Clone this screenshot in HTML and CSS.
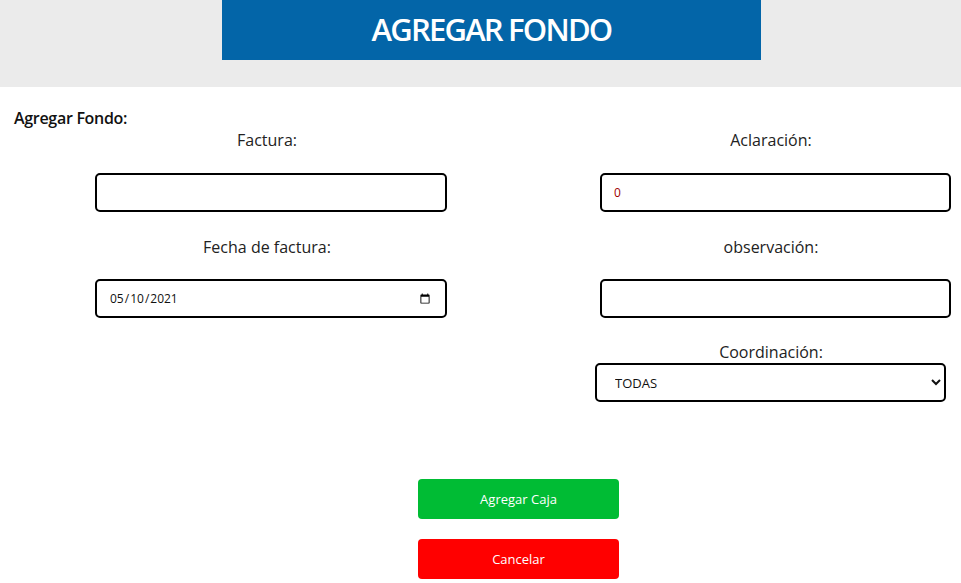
FILE: index.html
```html
<!DOCTYPE html>
<html lang="es">
<head>
<meta charset="utf-8">
<title>Agregar Fondo</title>
<link rel="stylesheet" href="styles.css">
</head>
<body>
<header class="top">
  <h1 class="banner">AGREGAR FONDO</h1>
</header>
<main class="content">
  <div class="section-title">Agregar Fondo:</div>
  <div class="grid">
    <div class="col col-left">
      <label class="lbl">Factura:</label>
      <input class="field" type="text">
      <label class="lbl">Fecha de factura:</label>
      <input class="field date" type="date" value="2021-05-10">
    </div>
    <div class="col col-right">
      <label class="lbl">Aclaración:</label>
      <input class="field red" type="text" value="0">
      <label class="lbl">observación:</label>
      <input class="field" type="text">
      <label class="lbl lbl-tight">Coordinación:</label>
      <select class="field select"><option>TODAS</option></select>
    </div>
  </div>
  <div class="actions">
    <button class="btn btn-green">Agregar Caja</button>
    <button class="btn btn-red">Cancelar</button>
  </div>
</main>
</body>
</html>
```
FILE: styles.css
```css
* { box-sizing: border-box; }
html, body { margin: 0; padding: 0; background: #fff; }
body { font-family: "Open Sans", "Liberation Sans", sans-serif; color: #1b1b1b; width: 961px; overflow: hidden; }

.top {
  background: #ebebeb;
  height: 87px;
  display: flex;
  justify-content: center;
}
.banner {
  margin: 0 0 0 22px;
  width: 539px;
  height: 60px;
  background: #0365a8;
  color: #fff;
  font-size: 31px;
  font-weight: 600;
  letter-spacing: -1.8px;
  line-height: 58px;
  text-align: center;
}

.content { padding: 0; }
.section-title {
  margin: 20px 0 0 14px;
  font-size: 16px;
  font-weight: 600;
  line-height: 22px;
  color: #111;
  letter-spacing: -0.3px;
}

.grid {
  display: grid;
  grid-template-columns: 360px 360px;
  column-gap: 144px;
  padding-left: 87px;
  margin-top: -1px;
}
.col { display: flex; flex-direction: column; }
.lbl {
  display: block;
  text-align: center;
  font-size: 16px;
  line-height: 24px;
  color: #222;
}
.field {
  display: block;
  height: 39px;
  border: 2px solid #000;
  border-radius: 5px;
  background: #fff;
  margin: 21px 0 23px 8px;
  width: 352px;
  font-family: "Open Sans", "Liberation Sans", sans-serif;
  font-size: 12px;
  padding: 0 12px;
  color: #111;
  outline: none;
}
.field + .lbl + .field { margin-top: 20px; }
.col-right .field { margin-left: 9px; width: 351px; }
.field.date { padding-left: 12px; color: #111; }
.field.red { color: #a00000; }
.lbl-tight { line-height: 22px; }
.col-right .field.select {
  margin: 0 0 0 4px;
  width: 351px;
  font-size: 13px;
  padding-left: 14px;
  color: #111;
}

.actions {
  display: flex;
  flex-direction: column;
  align-items: center;
  gap: 20px;
  padding-left: 76px;
  margin-top: 77px;
}
.btn {
  width: 201px;
  height: 40px;
  border: 0;
  border-radius: 4px;
  color: #fff;
  font-family: "Open Sans", "Liberation Sans", sans-serif;
  font-size: 13px;
  cursor: pointer;
}
.btn-green { background: #00bc34; }
.btn-red { background: #ff0000; }
```
